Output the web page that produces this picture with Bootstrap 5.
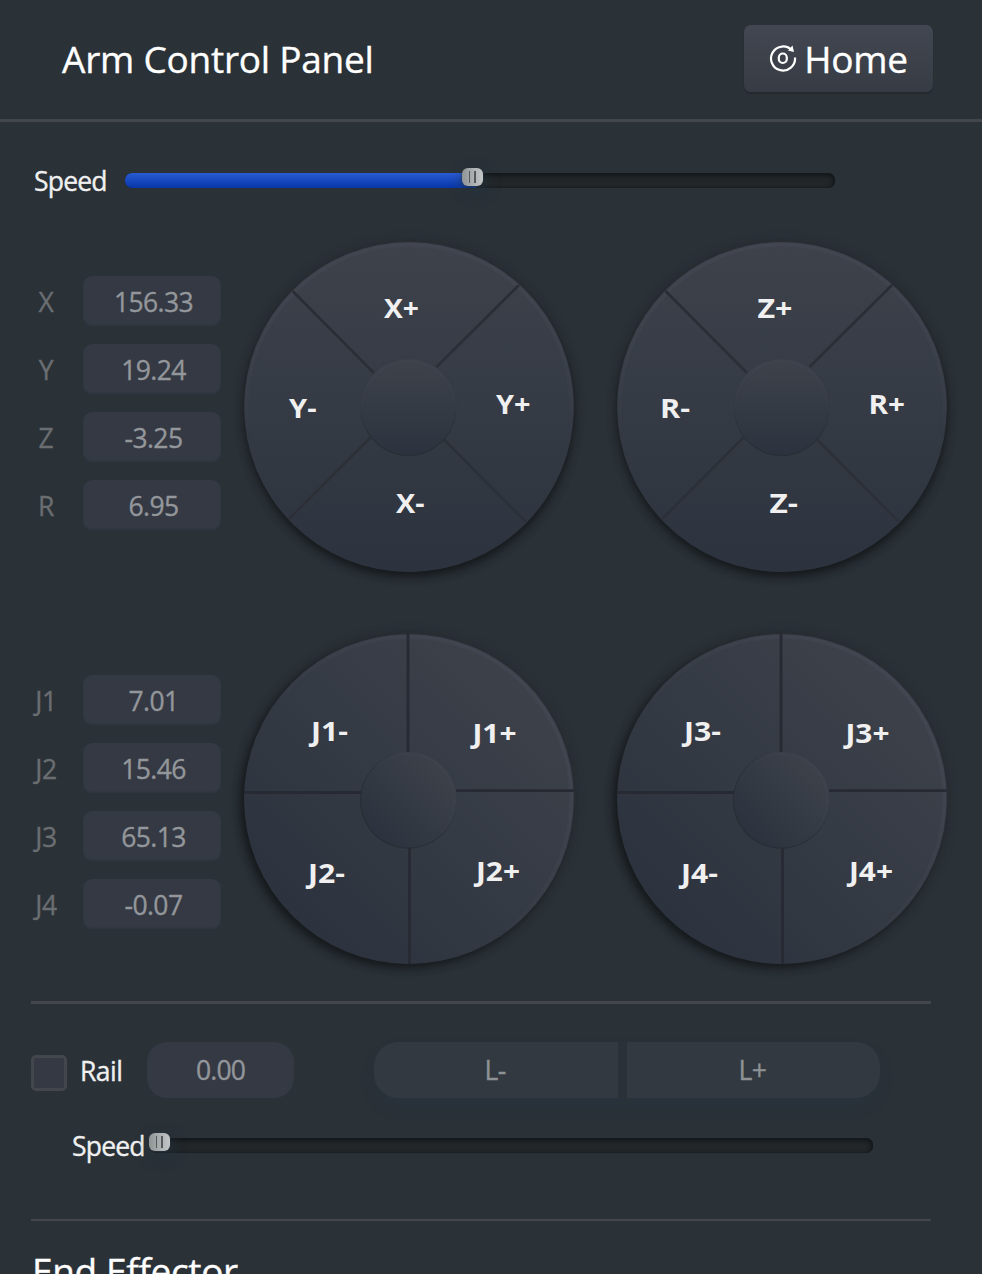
<!DOCTYPE html>
<html lang="en">
<head>
<meta charset="utf-8">
<meta name="viewport" content="width=device-width, initial-scale=1">
<title>Arm Control Panel</title>
<link href="https://cdn.jsdelivr.net/npm/bootstrap@5.3.0/dist/css/bootstrap.min.css" rel="stylesheet">
<style>
body{background:#2a3137;color:#f0f0f0;font:400 26.5px/36px "Open Sans","Noto Sans",sans-serif;-webkit-text-stroke:.35px;font-variant-ligatures:none;height:1274px;overflow:hidden}
.panel{width:982px;height:1274px;overflow:hidden}
.top-bar{height:122px;border-bottom:3px solid #44464e;padding:0 49px 0 62px}
.big-title{font-size:37px;line-height:50px;letter-spacing:-.24px;color:#fff;font-weight:400}
.btn-home{width:189px;height:67px;margin-bottom:2px;border:0;border-radius:7px;background:linear-gradient(#424751,#363b44);box-shadow:0 2px 1px #262930;color:#fff;font-size:37px;letter-spacing:-.3px;line-height:50px;padding:0}
.btn-home:hover{color:#fff}
.caption{letter-spacing:-.8px}
.speed-row{height:36px}
.slide-track{position:relative;height:15px;border-radius:7px;background:#222629;box-shadow:inset 0 3px 4px #14181b,inset -2px 0 3px #171b1e}
.slide-fill{height:15px;border-radius:7px 0 0 7px;background:linear-gradient(#295bd2,#0736a9)}
.slide-thumb{position:absolute;top:-5.500px;width:21px;height:18px;border-radius:6px;background:linear-gradient(90deg,#8f9495,#c3c7c9);box-shadow:0 0 1px 1px #30363b66,2px 5px 12px 3px #20303c88}
.slide-thumb::before{content:"";position:absolute;left:7px;top:3px;width:7px;height:12px;border:solid #55595b;border-width:0 2px 0 1px}
.axis-list{width:190px;gap:18px}
.axis-row{height:50px}
.axis-name{width:30px;text-align:center;color:#6a6e71;letter-spacing:-.3px;padding-top:2px}
.axis-value{width:138px;height:50px;border:0;border-radius:9px;background:#343943;color:#93969a;box-shadow:inset 0 -1px 1px #303641;text-align:center;padding:2px 0 0 3px;font:inherit;letter-spacing:-.6px}
.dial{width:330px;height:330px;overflow:visible;display:block;border-radius:50%;margin-top:.5px}
.dial text{font:700 27px "Open Sans","Noto Sans",sans-serif;fill:#f0f0f0;-webkit-text-stroke:0}
.dial-cross{box-shadow:0 5px 9px #15191c,0 0 9px 2px #2d2b3380}
.dial-plus{box-shadow:-4px 4px 9px #15191c,0 0 9px 2px #2d2b3380}
.rule{height:3px;width:900px;background:#44464e}
.rule-thin{height:2px}
.check-square{width:36px;height:36px;border:3px solid #44464e;border-radius:5px;background:#343943}
.rail-value{width:147px;height:56px;border:0;border-radius:20px;background:#343943;color:#93969a;text-align:center;font:inherit;letter-spacing:-.8px;padding:0}
.btn-rail{height:56px;border:0;padding:0 2px 0 0;background:#323940;color:#8e9295;font-size:26.5px;line-height:36px;letter-spacing:-.6px}
.rail-group{width:506px;gap:9px;border-radius:28px;box-shadow:0 9px 12px 0 #25343f88}
.rail-less{width:244px;border-radius:24px 0 0 24px}
.rail-more{width:253px;border-radius:0 24px 24px 0}
</style>
</head>
<body>
<svg width="0" height="0" class="d-block position-absolute" aria-hidden="true">
  <defs>
    <linearGradient id="face" x1="0" y1="0" x2="0" y2="1"><stop offset="0" stop-color="#3d424b"/><stop offset="1" stop-color="#2d333e"/></linearGradient>
    <linearGradient id="faceTilt" x1=".85" y1=".15" x2=".15" y2=".85"><stop offset="0" stop-color="#3c414a"/><stop offset="1" stop-color="#2d333e"/></linearGradient>
    <linearGradient id="edge" x1="0" y1="0" x2="0" y2="1"><stop offset="0" stop-color="#444752"/><stop offset=".6" stop-color="#444752" stop-opacity="0"/></linearGradient>
    <linearGradient id="edgeTilt" x1=".85" y1=".15" x2=".15" y2=".85"><stop offset="0" stop-color="#444752"/><stop offset=".6" stop-color="#444752" stop-opacity="0"/></linearGradient>
    <linearGradient id="cut" gradientUnits="userSpaceOnUse" x1="0" y1="40" x2="0" y2="290"><stop offset="0" stop-color="#2b2d36"/><stop offset=".5" stop-color="#2c3037"/><stop offset="1" stop-color="#2c2f37"/></linearGradient>
    <filter id="soft"><feGaussianBlur stdDeviation="1.2"/></filter>
    <g id="dialCross">
      <circle cx="165" cy="165" r="164.700" fill="url(#face)"/>
      <circle cx="165" cy="165" r="162.500" fill="none" stroke="url(#edge)" stroke-width="3" filter="url(#soft)"/>
      <path d="M48.500 49 130 131M275 43 192.500 125M126.500 195.500 45 277M200 197.500 281.500 279.500" stroke="url(#cut)" stroke-width="2.800"/>
      <circle cx="164.500" cy="166.500" r="47.500" fill="#292e36"/>
      <circle cx="164.500" cy="165" r="47.500" fill="url(#face)"/>
      <circle cx="164.500" cy="165" r="46" fill="none" stroke="url(#edge)" stroke-width="2" filter="url(#soft)" opacity=".5"/>
    </g>
    <g id="dialPlus">
      <circle cx="165" cy="165" r="164.700" fill="url(#faceTilt)"/>
      <circle cx="165" cy="165" r="162.500" fill="none" stroke="url(#edgeTilt)" stroke-width="3" filter="url(#soft)"/>
      <path d="M164 0V118M165.500 213V330M0 158.500H118M212 156.700H329.500" stroke="#272a33" stroke-width="2.800"/>
      <circle cx="164" cy="166.700" r="48" fill="#292e36"/>
      <circle cx="164.700" cy="165.800" r="47.500" fill="url(#faceTilt)"/>
      <circle cx="164.700" cy="165.800" r="46" fill="none" stroke="url(#edgeTilt)" stroke-width="2" filter="url(#soft)" opacity=".5"/>
    </g>
  </defs>
</svg>
<main class="panel d-flex flex-column">
  <header class="top-bar d-flex align-items-center justify-content-between flex-shrink-0">
    <h1 class="big-title m-0" style="padding-bottom:1px">Arm Control Panel</h1>
    <button type="button" class="btn btn-home d-flex align-items-center justify-content-center">
      <svg width="28" height="30" viewBox="0 0 28 30" fill="none" stroke="#fff" stroke-width="2.200" style="margin-right:7px"><path d="M23 6.500A12 12 0 1 0 26 13.500"/><path d="M23.500 1.500 25 8 19 6.500Z" fill="#fff" stroke="none"/><rect x="9.800" y="9.500" width="8" height="9.500" rx="4"/></svg><span>Home</span>
    </button>
  </header>

  <section class="speed-row d-flex align-items-center flex-shrink-0" style="margin:41px 0 0 34px">
    <div class="caption" style="width:91px">Speed</div>
    <div class="slide-track" style="width:710px;margin-top:-1px"><div class="slide-fill" style="width:351px"></div><div class="slide-thumb" style="left:337px"></div></div>
  </section>

  <section class="d-flex flex-shrink-0" style="margin:42px 0 0 31px;height:330px">
    <div class="axis-list d-flex flex-column" style="padding-top:35px">
      <div class="axis-row d-flex align-items-center justify-content-between"><label class="axis-name">X</label><input class="axis-value" value="156.33"></div>
      <div class="axis-row d-flex align-items-center justify-content-between"><label class="axis-name">Y</label><input class="axis-value" value="19.24"></div>
      <div class="axis-row d-flex align-items-center justify-content-between"><label class="axis-name">Z</label><input class="axis-value" value="-3.25"></div>
      <div class="axis-row d-flex align-items-center justify-content-between"><label class="axis-name">R</label><input class="axis-value" value="6.95"></div>
    </div>
    <svg class="dial dial-cross" style="margin-left:22.500px" viewBox="0 0 330 330"><use href="#dialCross"/>
      <text x="140" y="76" textLength="35" lengthAdjust="spacingAndGlyphs">X+</text><text x="152" y="270.500" textLength="28.500" lengthAdjust="spacingAndGlyphs">X-</text><text x="45" y="175.500" textLength="27.500" lengthAdjust="spacingAndGlyphs">Y-</text><text x="252" y="171.500" textLength="34.500" lengthAdjust="spacingAndGlyphs">Y+</text></svg>
    <svg class="dial dial-cross" style="margin-left:43.500px" viewBox="0 0 330 330"><use href="#dialCross"/>
      <text x="140.500" y="76" textLength="35" lengthAdjust="spacingAndGlyphs">Z+</text><text x="152.500" y="270.500" textLength="28.500" lengthAdjust="spacingAndGlyphs">Z-</text><text x="43" y="175.500" textLength="30" lengthAdjust="spacingAndGlyphs">R-</text><text x="251.500" y="171.500" textLength="36.500" lengthAdjust="spacingAndGlyphs">R+</text></svg>
  </section>

  <section class="d-flex flex-shrink-0" style="margin:62px 0 0 31px;height:330px">
    <div class="axis-list d-flex flex-column" style="padding-top:42px">
      <div class="axis-row d-flex align-items-center justify-content-between"><label class="axis-name">J1</label><input class="axis-value" value="7.01"></div>
      <div class="axis-row d-flex align-items-center justify-content-between"><label class="axis-name">J2</label><input class="axis-value" value="15.46"></div>
      <div class="axis-row d-flex align-items-center justify-content-between"><label class="axis-name">J3</label><input class="axis-value" value="65.13"></div>
      <div class="axis-row d-flex align-items-center justify-content-between"><label class="axis-name">J4</label><input class="axis-value" value="-0.07"></div>
    </div>
    <svg class="dial dial-plus" style="margin-left:22.500px" viewBox="0 0 330 330"><use href="#dialPlus"/>
      <text x="67" y="106.500" textLength="37" lengthAdjust="spacingAndGlyphs">J1-</text><text x="228.500" y="108.500" textLength="44" lengthAdjust="spacingAndGlyphs">J1+</text><text x="64" y="248.500" textLength="37" lengthAdjust="spacingAndGlyphs">J2-</text><text x="232" y="246.500" textLength="44" lengthAdjust="spacingAndGlyphs">J2+</text></svg>
    <svg class="dial dial-plus" style="margin-left:43.500px" viewBox="0 0 330 330"><use href="#dialPlus"/>
      <text x="67" y="106.500" textLength="37" lengthAdjust="spacingAndGlyphs">J3-</text><text x="228.500" y="108.500" textLength="44" lengthAdjust="spacingAndGlyphs">J3+</text><text x="64" y="248.500" textLength="37" lengthAdjust="spacingAndGlyphs">J4-</text><text x="232" y="246.500" textLength="44" lengthAdjust="spacingAndGlyphs">J4+</text></svg>
  </section>

  <div class="rule flex-shrink-0" style="margin:38px 0 0 31px"></div>

  <section class="d-flex align-items-center flex-shrink-0" style="margin:38px 0 0 31px;height:56px">
    <span class="check-square" style="margin-top:6px" role="checkbox" aria-checked="false"></span>
    <span class="caption" style="width:67px;margin-left:13px;padding-top:2px;letter-spacing:-.5px">Rail</span>
    <input class="rail-value" value="0.00">
    <div class="rail-group d-flex" style="margin-left:80px">
      <button type="button" class="btn btn-rail rail-less">L-</button>
      <button type="button" class="btn btn-rail rail-more">L+</button>
    </div>
  </section>

  <section class="speed-row d-flex align-items-center flex-shrink-0" style="margin:30px 0 0 72px">
    <div class="caption" style="width:78px">Speed</div>
    <div class="slide-track" style="width:723px;margin-top:-1px"><div class="slide-thumb" style="left:-1px"></div></div>
  </section>

  <div class="rule rule-thin flex-shrink-0" style="margin:55px 0 0 31px"></div>
  <h2 class="big-title flex-shrink-0" style="margin:25px 0 0 32px;letter-spacing:-.35px">End Effector</h2>
</main>
<script src="https://cdn.jsdelivr.net/npm/bootstrap@5.3.0/dist/js/bootstrap.bundle.min.js"></script>
</body>
</html>
